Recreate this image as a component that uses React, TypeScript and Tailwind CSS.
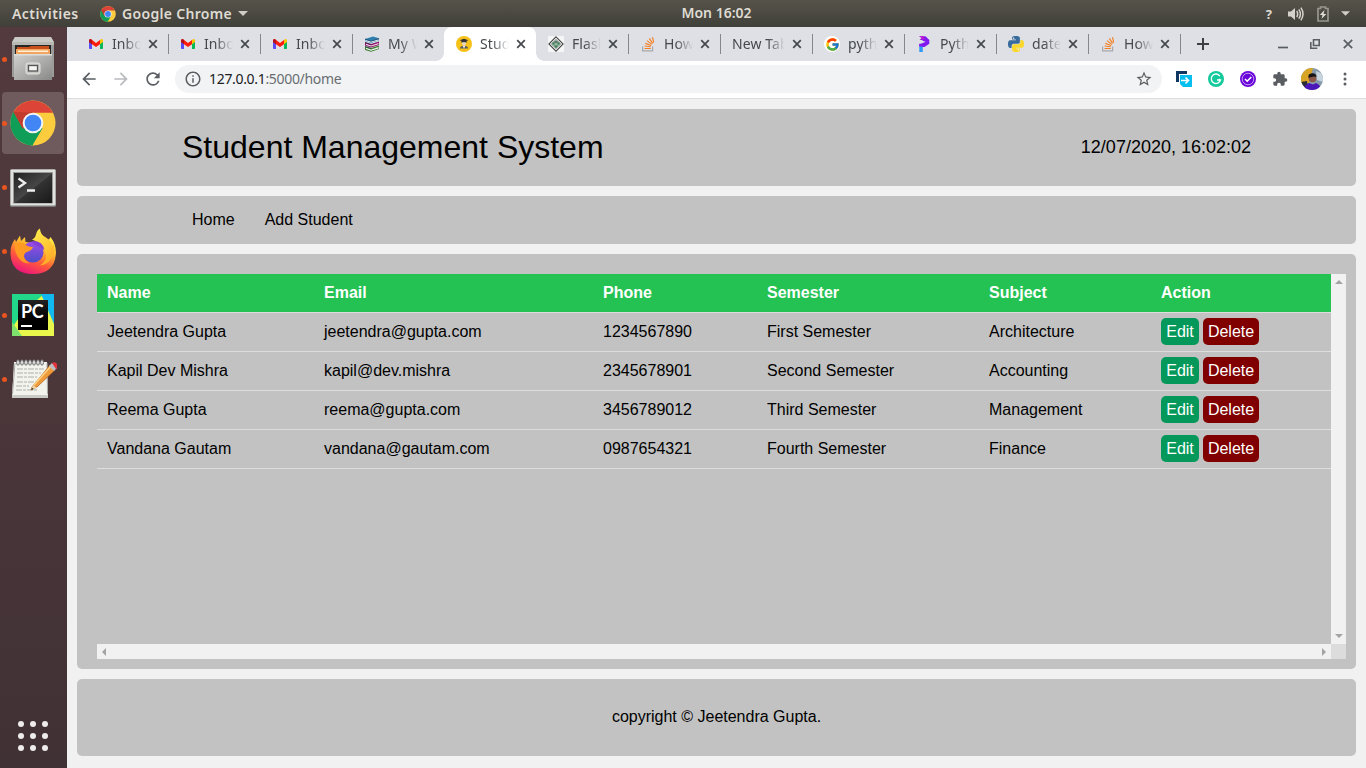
import React from "react";
import { FcGoogle } from "react-icons/fc";
import { MdExtension, MdArrowBack, MdArrowForward, MdRefresh, MdStarBorder, MdOutlineInfo, MdMoreVert } from "react-icons/md";

const PY_HALF =
  "M14.25.18l.9.2.73.26.59.3.45.32.34.34.25.34.16.33.1.3.04.26.02.2-.01.13V8.5l-.05.63-.13.55-.21.46-.26.38-.3.31-.33.25-.35.19-.35.14-.33.1-.3.07-.26.04-.21.02H8.77l-.69.05-.59.14-.5.22-.41.27-.33.32-.27.35-.2.36-.15.37-.1.35-.07.32-.04.27-.02.21v3.06H3.17l-.21-.03-.28-.07-.32-.12-.35-.18-.36-.26-.36-.36-.35-.46-.32-.59-.28-.73-.21-.88-.14-1.05-.05-1.23.06-1.22.16-1.04.24-.87.32-.71.36-.57.4-.44.42-.33.42-.24.4-.16.36-.1.32-.05.24-.01h.16l.06.01h8.16v-.83H6.18l-.01-2.75-.02-.37.05-.34.11-.31.17-.28.25-.26.31-.23.38-.2.44-.18.51-.15.58-.12.64-.1.71-.06.77-.04.84-.02 1.27.05z";

function ChromeLogo({ className }: { className: string }) {
  return (
    <svg viewBox="0 0 48 48" className={className}>
      <circle cx="24" cy="24" r="23.5" fill="#fccc3f" />
      <path d="M3.600 12.300A23.500 23.500 0 0 0 23.500 47.500L34 29.600L20 20L12 14Z" fill="#109d58" />
      <path d="M23.500 47.500L35 28.500L40 34Z" fill="#fccc3f" />
      <path d="M3.600 12.300A23.500 23.500 0 0 1 44.800 13.300L24 13.300L13.500 30Z" fill="#dc4437" />
      <path d="M3.600 12.300L24 13.300L13.500 30Z" fill="#c33a2e" />
      <circle cx="24" cy="24" r="10.8" fill="#f4f4f4" />
      <circle cx="24" cy="24" r="8.7" fill="#4286f5" />
    </svg>
  );
}

function Gmail() {
  return (
    <svg viewBox="0 0 16 16" className="h-4 w-4">
      <path d="M1 4v8.2q0 .8.8.8H4V6z" fill="#5a4df5" />
      <path d="M15 4v8.2q0 .8-.8.8H12V6z" fill="#08b957" />
      <path d="M12 6V4l1-.8q1-.5 1.7.2.3.4.3 1.2V6l-3 2.2z" fill="#fcc400" />
      <path d="M1 6V4.600Q1 3 2.400 3q.6 0 1.100.5L8 7l4-3v4.200L8 11 4 8.200 1 6z" fill="#fb1c0c" />
      <path d="M1 6V4.500Q1.200 3 2.500 3L4 4v4z" fill="#b3101c" />
    </svg>
  );
}

function Books() {
  return (
    <svg viewBox="0 0 16 16" className="h-4 w-4">
      <path d="M1 3L9 .5l6 1.700v2L7 7 1 5z" fill="#2f7fae" />
      <path d="M1.500 4l5.500 1.500 7.500-2.300v1L7 6.500 1.500 5z" fill="#e8f1f4" />
      <path d="M1 6l6 2 8-2.500v3.500L7 11.500 1 9.500z" fill="#8a1266" />
      <path d="M2 7.800l5 1.600 7.500-2.400v1.200L7 10.500 2 9z" fill="#f3dcec" />
      <path d="M1 10l6 2 8-2.500V13l-8 2.800L1 14z" fill="#3f7d33" />
      <path d="M2 11.800l5 1.800 7.500-2.500v1.300L7 14.800 2 13z" fill="#eef5ea" />
      <path d="M1 3l6 2.200L15 2.700M1 6.500l6 2M1 10.500l6 2" stroke="#263f5c" strokeWidth=".7" fill="none" />
    </svg>
  );
}

function Graduate() {
  return (
    <svg viewBox="0 0 16 16" className="h-4 w-4">
      <circle cx="8" cy="8" r="8" fill="#f6c21a" />
      <path d="M8 2.800l4.500 1.400L8 5.600 3.500 4.200z" fill="#2f2f35" />
      <path d="M5.500 4.600h5v2h-5z" fill="#2f2f35" />
      <circle cx="8" cy="7.600" r="2.100" fill="#edd7bd" />
      <path d="M5.500 5.200h5v1h-5z" fill="#2f2f35" />
      <path d="M4 12.600q0-2.800 4-2.800t4 2.800z" fill="#5b5d60" />
      <path d="M6.700 9.800h2.600L8 12.600z" fill="#fff" />
    </svg>
  );
}

function FlaskBadge() {
  return (
    <svg viewBox="0 0 16 16" className="h-4 w-4">
      <path d="M0 0h16v16H0z" fill="#f5f5f5" />
      <path d="M8 .9L15.100 8 8 15.100.9 8z" fill="#fff" stroke="#444" strokeWidth="1.100" />
      <path d="M8 3.200L12.800 8 8 12.800 3.200 8z" fill="#93b9a0" stroke="#666" strokeWidth=".5" />
      <path d="M4.500 6.500h2v2h-2zm5 0h2v2h-2zM6 9.500h4L8 12z" fill="#397852" />
      <path d="M6.500 5.500h3v1h-3z" fill="#333" />
    </svg>
  );
}

function StackOverflow() {
  return (
    <svg viewBox="0 0 16 16" className="h-4 w-4" fill="none">
      <path d="M2.600 10.500v4.300h10v-4.300" stroke="#a6a8ab" strokeWidth="1.200" />
      <path d="M4.500 12.500h6.300M4.600 10l6.200.8M5.300 7.400l5.900 2.100M7 4.600l4.900 3.800M9.300 2.400l3.400 5M12.500 1.200l1.200 5.500" stroke="#f48024" strokeWidth="1.150" />
    </svg>
  );
}

function GoogleBadge() {
  return (
    <span className="flex h-4 w-4 items-center justify-center rounded-full bg-white">
      <FcGoogle className="h-[15px] w-[15px]" />
    </span>
  );
}

function PurpleP() {
  return (
    <svg viewBox="0 0 16 16" className="h-4 w-4">
      <path d="M3 .3h6.500L13.300 4v3.700L8.500 11H3.300L3 8l5-2-2-2H3.600L6 2z" fill="#8118ee" />
      <path d="M3 .3h4l2 3H4L6 2z" fill="#c315c9" />
      <path d="M3.300 10.500h3.500V16H3.300z" fill="#2f9bf5" />
      <path d="M6.800 5l3 .8L3.500 8.200z" fill="#dee0e5" />
    </svg>
  );
}

function Python() {
  return (
    <svg viewBox="0 0 24 24" className="h-4 w-4">
      <path d={PY_HALF} fill="#396c9d" />
      <path d={PY_HALF} fill="#fad72b" transform="rotate(180 12 12)" />
      <circle cx="8.500" cy="3.200" r="1.100" fill="#fff" />
      <circle cx="15.500" cy="20.800" r="1.100" fill="#fff" />
    </svg>
  );
}

type TabInfo = { title: string; icon?: React.ReactNode; active?: boolean; divider?: boolean };

const tabs: TabInfo[] = [
  { title: "Inbo", icon: <Gmail />, divider: true },
  { title: "Inbo", icon: <Gmail />, divider: true },
  { title: "Inbo", icon: <Gmail />, divider: true },
  { title: "My W", icon: <Books /> },
  { title: "Stud", icon: <Graduate />, active: true },
  { title: "Flask", icon: <FlaskBadge />, divider: true },
  { title: "How", icon: <StackOverflow />, divider: true },
  { title: "New Tab", divider: true },
  { title: "pyth", icon: <GoogleBadge />, divider: true },
  { title: "Pyth", icon: <PurpleP />, divider: true },
  { title: "date", icon: <Python />, divider: true },
  { title: "How", icon: <StackOverflow />, divider: true },
];

function Tab({ title, icon, active, divider }: TabInfo) {
  return (
    <div className={`relative flex h-[34px] w-[92px] shrink-0 items-center pl-3 ${active ? "rounded-t-lg bg-white" : ""}`}>
      {icon && <span className="mr-2 w-4 shrink-0">{icon}</span>}
      <span className="mr-[7px] min-w-0 flex-1 overflow-hidden [mask-image:linear-gradient(to_right,#000_calc(100%-17px),transparent)] whitespace-nowrap text-[14px] leading-5 tracking-[0.1px] text-[#45494d]">
        {title}
      </span>
      <svg viewBox="0 0 10 10" className="mr-[10px] h-[10px] w-[10px] shrink-0">
        <path d="M1.200 1.200l7.600 7.600M8.800 1.200L1.200 8.800" stroke="#45494d" strokeWidth="1.700" />
      </svg>
      {divider && <span className="absolute top-[7px] right-[-1px] h-5 w-px bg-[#85878c]" />}
      {active && (
        <>
          <span className="absolute bottom-0 -left-2 h-2 w-2 bg-[radial-gradient(circle_at_0_0,transparent_7.5px,#fff_8px)]" />
          <span className="absolute -right-2 bottom-0 h-2 w-2 bg-[radial-gradient(circle_at_100%_0,transparent_7.500px,#fff_8px)]" />
        </>
      )}
    </div>
  );
}

function TopBar() {
  return (
    <header className="grid h-[27px] shrink-0 grid-cols-[1fr_100px_1fr] items-center bg-linear-to-b from-[#56534a] to-[#403f39] pl-[67px] text-[14px] leading-none font-semibold text-[#dfdbd2]">
      <div className="-ml-[67px] flex items-center pl-3">
        <span className="w-[68px] tracking-[0.42px] whitespace-nowrap">Activities</span>
        <ChromeLogo className="ml-5 h-4 w-4" />
        <span className="ml-[6px] w-[111px] tracking-[0.32px] whitespace-nowrap">Google Chrome</span>
        <svg viewBox="0 0 10 5" className="ml-[5px] h-[5px] w-[10px]"><path d="M0 0h10L5 5z" fill="#d0cdc5" /></svg>
      </div>
      <div className="-mt-px text-center">Mon 16:02</div>
      <div className="flex items-center justify-end pr-4">
        <span className="mr-[16px] pt-[2px] text-[13px] font-bold">?</span>
        <svg viewBox="0 0 16 16" className="mr-[13px] h-4 w-4" fill="none" stroke="#d5d2ca">
          <path d="M0 5.500h3L7 2v12l-4-3.500H0z" fill="#d5d2ca" stroke="none" />
          <path d="M8.700 5q2 3 0 6M10.800 3.300q3.200 4.700 0 9.400M12.900 1.700q4.200 6.300 0 12.600" strokeWidth="1.500" />
        </svg>
        <svg viewBox="0 0 12 16" className="mr-[12px] h-4 w-3">
          <path d="M1 2.500h2.500V1h5v1.500H11V15H1z" fill="none" stroke="#99968e" strokeWidth="1.700" />
          <path d="M7.500 4L2.800 9h2.700L4.500 13 9.300 8H6.600z" fill="#e1ded6" />
        </svg>
        <svg viewBox="0 0 10 5" className="h-[5px] w-[9px]"><path d="M0 0h10L5 5z" fill="#d0cdc5" /></svg>
      </div>
    </header>
  );
}

function FilesIcon() {
  return (
    <svg viewBox="0 0 48 48" className="h-12 w-12">
      <defs>
        <linearGradient id="cab" x1="0" y1="0" x2="1" y2="1"><stop stopColor="#d0d0ce" /><stop offset=".6" stopColor="#a7a7a5" /><stop offset="1" stopColor="#888886" /></linearGradient>
      </defs>
      <path d="M6 2h36l3 6v34H3V8z" fill="#9b9b99" />
      <path d="M6 2h36l3 5H3z" fill="#c9c9c6" />
      <path d="M3 7h42v3H3z" fill="#b8b8b5" />
      <path d="M6 10h36v12H6z" fill="#262626" />
      <path d="M8 12h12l2-1h18v5H8z" fill="#c95119" />
      <path d="M7 14h34v6H7z" fill="#f3a55f" />
      <path d="M9 15.500h30v1.500H9z" fill="#fff0d5" />
      <path d="M5 19h38v26H5z" fill="url(#cab)" />
      <path d="M5 19h38v1.500H5z" fill="#ddd" />
      <rect x="17" y="28" width="14" height="11" rx="2" fill="#c7c7c4" stroke="#e4e4e1" />
      <rect x="19.500" y="30.500" width="9" height="5.500" fill="#f5f5f3" stroke="#555" strokeWidth="1.300" />
    </svg>
  );
}

function TerminalIcon() {
  return (
    <svg viewBox="0 0 48 48" className="mt-[3px] h-12 w-12">
      <defs><linearGradient id="term" x1="0" y1="0" x2="1" y2="1"><stop stopColor="#222" /><stop offset=".5" stopColor="#474747" /><stop offset=".52" stopColor="#333" /><stop offset="1" stopColor="#181818" /></linearGradient></defs>
      <rect x="1" y="5" width="46" height="38" rx="1.500" fill="#777" />
      <rect x="1.500" y="5.500" width="45" height="36" rx="1" fill="#e1e1df" />
      <rect x="4" y="8" width="40" height="31.500" fill="#9a9a98" />
      <rect x="5" y="9" width="38" height="30" fill="url(#term)" />
      <path d="M9.500 14.500l6.500 4.500-6.500 4.500M18 26.500h8" fill="none" stroke="#eee" strokeWidth="2.300" />
    </svg>
  );
}

function FirefoxIcon() {
  return (
    <svg viewBox="0 0 48 48" className="h-12 w-12">
      <defs>
        <linearGradient id="fox" x1=".8" y1="0" x2=".3" y2="1"><stop stopColor="#fff24a" /><stop offset=".35" stopColor="#ffb72c" /><stop offset=".65" stopColor="#ff593b" /><stop offset="1" stopColor="#ed127e" /></linearGradient>
        <linearGradient id="globe" x1="0" y1="0" x2="0" y2="1"><stop stopColor="#a04be9" /><stop offset="1" stopColor="#4c4fc6" /></linearGradient>
        <linearGradient id="tail" x1="0" y1="0" x2=".5" y2="1"><stop stopColor="#fff34f" /><stop offset="1" stopColor="#ffae29" /></linearGradient>
      </defs>
      <path d="M11 8.500l1 5.500 4-4 .5 5L24 16l7-3 9-.5 1.500-2.500Q47 17 47 25.500 46 47 24 47T1.500 26q0-8 4.500-14l1 3z" fill="url(#fox)" />
      <path d="M23 12.500q3-1 4-5Q28 3 31 1.500q0 6 6 9 6 4 6.500 9l1-3q2 8-1.500 14-4 7-12 8 9-6 5-14-3-9-13-12z" fill="url(#tail)" />
      <circle cx="24" cy="25" r="10.500" fill="url(#globe)" />
      <path d="M24 14q10 0 11.500 9-3-3-6-3l-6-4z" fill="#8440d4" />
      <path d="M6 17q5-3 10 0 2 3 8 3-1 3-5 4.500-4 1-4 5 1 5 6 7-9 0-13-8Q5 23 6 17z" fill="#ff9a23" />
    </svg>
  );
}

function PyCharmIcon() {
  return (
    <div className="relative flex h-[42px] w-[42px] items-center justify-center">
      <svg viewBox="0 0 42 42" className="absolute inset-0 h-[42px] w-[42px]">
        <defs><linearGradient id="pcl" x1="0" y1="1" x2=".6" y2="0"><stop stopColor="#a9e85a" /><stop offset=".3" stopColor="#24d58b" /><stop offset="1" stopColor="#22d68a" /></linearGradient></defs>
        <path d="M0 0h42v42H0z" fill="#fbf44c" />
        <path d="M0 0h32L0 36z" fill="url(#pcl)" />
        <path d="M0 28L32 0l10 24v18H0z" fill="#e9f64b" />
        <path d="M0 0h30L12 16 0 34z" fill="#22d68a" />
        <path d="M29 0h13v30z" fill="#12b9f0" />
        <path d="M0 28v14h10z" fill="#7fe26c" />
      </svg>
      <div className="relative flex h-[30px] w-[30px] flex-col bg-linear-to-b from-[#222] to-black pt-[3px] pl-[3px] text-white">
        <span className="font-[Lato] text-[18px] leading-[16px] font-bold tracking-[-0.3px]">PC</span>
        <span className="mt-[6px] h-[2px] w-[11px] bg-white" />
      </div>
    </div>
  );
}

function NotesIcon() {
  return (
    <svg viewBox="0 0 48 48" className="h-12 w-12">
      <path d="M5 7h33l1 35H3z" fill="#f3f3ed" />
      <path d="M3 40h36v3H3z" fill="#cbcbc5" />
      <path d="M3.500 39L6 8M38.500 39L38 8" stroke="#aaa" />
      <path d="M8 14h27M8 18h24M8 22h20M8 27h22M7 31h13M7 35h22" stroke="#b0b0aa" strokeWidth="1.200" strokeDasharray="6 1 3 1" />
      {[9, 13, 17, 21, 25, 29, 33].map((x) => (
        <ellipse key={x} cx={x} cy="7.500" rx="1.500" ry="2.700" fill="#ddd" stroke="#686868" strokeWidth=".9" />
      ))}
      <path d="M23 32L41 10l5 5-18 17-6 3z" fill="#ed9b3b" stroke="#b05b15" strokeWidth=".7" />
      <path d="M25 30L42 11" stroke="#ffd184" strokeWidth="1.600" />
      <path d="M40 11l3-3 5 5-3 3z" fill="#babdc4" />
      <path d="M43 8q3-2 5 1 2 3-1 5z" fill="#e3343c" />
      <path d="M22 35l2-5 4 3z" fill="#edd4a6" /><path d="M22 35l1-2 2 1z" fill="#222" />
    </svg>
  );
}

const launchers = [
  { name: "files", icon: <FilesIcon /> },
  { name: "chrome", icon: <ChromeLogo className="h-[46px] w-[46px]" />, active: true },
  { name: "terminal", icon: <TerminalIcon /> },
  { name: "firefox", icon: <FirefoxIcon /> },
  { name: "pycharm", icon: <PyCharmIcon /> },
  { name: "notes", icon: <NotesIcon /> },
];

function Dock() {
  return (
    <aside className="flex w-[67px] shrink-0 flex-col bg-linear-to-b from-[#523a3e] via-[#4b363a] to-[#403135]">
      {launchers.map((l) => (
        <div key={l.name} className="flex h-16 shrink-0 items-center">
          <div className={`ml-[2px] flex h-[62px] w-[62px] items-center rounded ${l.active ? "bg-[#6f5b5e]" : ""}`}>
            <span className="h-[5px] w-[5px] shrink-0 rounded-full bg-[#e95420]" />
            <span className="-mt-px flex w-[52px] shrink-0 justify-center">{l.icon}</span>
          </div>
        </div>
      ))}
      <div className="mt-auto mb-[17px] ml-[18px] grid w-[30px] grid-cols-3 gap-[6px]">
        {Array.from({ length: 9 }, (_, i) => (
          <span key={i} className="h-[6px] w-[6px] rounded-full bg-[#eeecec]" />
        ))}
      </div>
    </aside>
  );
}

function Toolbar() {
  return (
    <div className="flex h-[38px] shrink-0 items-center border-b border-[#dadce0] bg-white pb-px pl-3 text-[#5a5e63]">
      <MdArrowBack className="h-5 w-5" />
      <MdArrowForward className="ml-3 h-5 w-5 text-[#b9bbbe]" />
      <MdRefresh className="ml-3 h-5 w-5" />
      <div className="ml-3 flex h-7 w-[987px] items-center rounded-full bg-[#f1f3f4] pr-[9px] pl-[9px]">
        <MdOutlineInfo className="h-[18px] w-[18px]" />
        <span className="ml-[7px] text-[14px] leading-5 tracking-[-0.32px] text-[#6a6e73]">
          <span className="text-[#202124]">127.0.0.1</span>:5000/home
        </span>
        <MdStarBorder className="ml-auto h-[18px] w-[18px]" />
      </div>
      <svg viewBox="0 0 16 16" className="ml-[14px] h-4 w-4">
        <path d="M0 0h11v3H3v8H0z" fill="#103662" />
        <path d="M4 4h12v12H7l-3-3z" fill="#06bfee" />
        <path d="M5 9.500h7M9.500 6.500l3 3-3 3" fill="none" stroke="#fff" strokeWidth="1.600" />
      </svg>
      <svg viewBox="0 0 16 16" className="ml-4 h-4 w-4">
        <circle cx="8" cy="8" r="8" fill="#14c99b" />
        <path d="M11.800 5A4.700 4.700 0 1 0 12.500 9H9M12.500 9L10.800 8" fill="none" stroke="#fff" strokeWidth="1.400" />
      </svg>
      <svg viewBox="0 0 16 16" className="ml-4 h-4 w-4">
        <circle cx="8" cy="8" r="8" fill="#6907d9" />
        <circle cx="8" cy="8" r="5.800" fill="none" stroke="#d6baf5" strokeWidth=".8" />
        <path d="M5 8l2.200 2.200L11.300 6" fill="none" stroke="#fff" strokeWidth="1.600" />
      </svg>
      <MdExtension className="ml-4 h-4 w-4" />
      <svg viewBox="0 0 22 22" className="ml-[13px] h-[22px] w-[22px]">
        <defs><clipPath id="avatar"><circle cx="11" cy="11" r="11" /></clipPath></defs>
        <g clipPath="url(#avatar)">
          <path d="M0 0h22v22H0z" fill="#879aaa" />
          <path d="M0 0h12L8 15H0z" fill="#d8a426" />
          <path d="M15 3l7 3v8l-6-2z" fill="#c7d4de" />
          <path d="M0 14l6-1 1 7-5 2z" fill="#292e34" />
          <circle cx="11.500" cy="10.500" r="3.800" fill="#8d5848" />
          <path d="M7.500 10q-1-4.500 3.500-4.800T15.500 9l-2-.5-4 .8z" fill="#171417" />
          <path d="M3 22q0-5 5-7l4 1.500 3-1.500q5 2 5 7z" fill="#4b16b9" />
        </g>
      </svg>
      <svg viewBox="0 0 4 14" className="ml-[19.5px] h-[14px] w-1" fill="#5a5e63">
        <circle cx="2" cy="2" r="1.500" /><circle cx="2" cy="7" r="1.500" /><circle cx="2" cy="12" r="1.500" />
      </svg>
    </div>
  );
}

const students = [
  ["Jeetendra Gupta", "jeetendra@gupta.com", "1234567890", "First Semester", "Architecture"],
  ["Kapil Dev Mishra", "kapil@dev.mishra", "2345678901", "Second Semester", "Accounting"],
  ["Reema Gupta", "reema@gupta.com", "3456789012", "Third Semester", "Management"],
  ["Vandana Gautam", "vandana@gautam.com", "0987654321", "Fourth Semester", "Finance"],
];

const rowGrid = "grid h-[39px] grid-cols-[217px_279px_164px_222px_172px_180px] items-center border-b border-[#ddd] *:pl-[10px]";

function StudentTable() {
  return (
    <div className="grid h-[385px] w-[1249px] grid-cols-[1fr_15px] grid-rows-[1fr_15px]">
      <div>
        <div className={`${rowGrid} bg-[#24c252] font-bold text-white`}>
          {["Name", "Email", "Phone", "Semester", "Subject", "Action"].map((h) => <div key={h}>{h}</div>)}
        </div>
        {students.map((s) => (
          <div key={s[0]} className={rowGrid}>
            {s.map((v) => <div key={v}>{v}</div>)}
            <div className="flex gap-1 pb-px text-white">
              <button className="h-[27px] w-[38px] rounded-[5px] bg-[#04995a] pt-px">Edit</button>
              <button className="h-[27px] w-14 rounded-[5px] bg-[#800000] pt-px">Delete</button>
            </div>
          </div>
        ))}
      </div>
      <div className="flex flex-col items-center justify-between bg-[#f1f1f1] pt-[6px] pb-[6px]">
        <svg viewBox="0 0 8 4" className="h-1 w-2"><path d="M0 4L4 0l4 4z" fill="#a3a3a3" /></svg>
        <svg viewBox="0 0 8 4" className="h-1 w-2"><path d="M0 0l4 4 4-4z" fill="#a3a3a3" /></svg>
      </div>
      <div className="flex items-center justify-between bg-[#f1f1f1] px-[5px]">
        <svg viewBox="0 0 4 8" className="h-2 w-1"><path d="M4 0L0 4l4 4z" fill="#a3a3a3" /></svg>
        <svg viewBox="0 0 4 8" className="h-2 w-1"><path d="M0 0l4 4-4 4z" fill="#a3a3a3" /></svg>
      </div>
      <div className="bg-[#dcdcdc]" />
    </div>
  );
}

export default function App() {
  return (
    <div className="flex h-screen w-screen flex-col overflow-hidden font-['Noto_Sans',sans-serif]">
      <TopBar />
      <div className="flex min-h-0 flex-1">
        <Dock />
        <div className="flex min-w-0 flex-1 flex-col bg-[#f1f1f1]">
          <div className="flex h-[34px] shrink-0 items-center bg-[#dee0e5] pl-[9px]">
            {tabs.map((t, i) => <Tab key={i} {...t} />)}
            <svg viewBox="0 0 12 12" className="ml-[17px] h-3 w-3"><path d="M6 0v12M0 6h12" stroke="#3c4043" strokeWidth="2" /></svg>
            <svg viewBox="0 0 10 10" className="ml-auto h-[10px] w-[10px]"><path d="M0 8.500h10" stroke="#5a5e63" strokeWidth="1.700" /></svg>
            <svg viewBox="0 0 10 10" className="ml-[22px] h-[10px] w-[10px]" fill="none" stroke="#5a5e63" strokeWidth="1.600"><path d="M3.500.8h5.700v5.700H3.500zM.8 3v6.200h6.500" /></svg>
            <svg viewBox="0 0 10 10" className="mr-[13px] ml-[23px] h-[10px] w-[10px]"><path d="M.8.8l8.400 8.400M9.200.8L.8 9.200" stroke="#5a5e63" strokeWidth="1.700" /></svg>
          </div>
          <Toolbar />
          <main className="flex flex-1 flex-col gap-[10px] p-[10px] font-['Liberation_Sans',Arial,sans-serif] text-[16px] leading-[18px] text-black *:rounded-[5px] *:bg-[#c2c2c2]">
            <div className="flex h-[77px] shrink-0 items-center justify-between pr-[105px] pb-[2px] pl-[105px]">
              <h1 className="text-[32px] leading-9">Student Management System</h1>
              <span className="text-[18px]">12/07/2020, 16:02:02</span>
            </div>
            <nav className="flex h-12 shrink-0 items-center gap-[30px] pl-[115px]">
              <a>Home</a>
              <a>Add Student</a>
            </nav>
            <section className="h-[415px] shrink-0 pt-5 pl-5">
              <StudentTable />
            </section>
            <footer className="flex h-[77px] shrink-0 items-center justify-center pb-[2px]">copyright © Jeetendra Gupta.</footer>
          </main>
        </div>
      </div>
    </div>
  );
}
